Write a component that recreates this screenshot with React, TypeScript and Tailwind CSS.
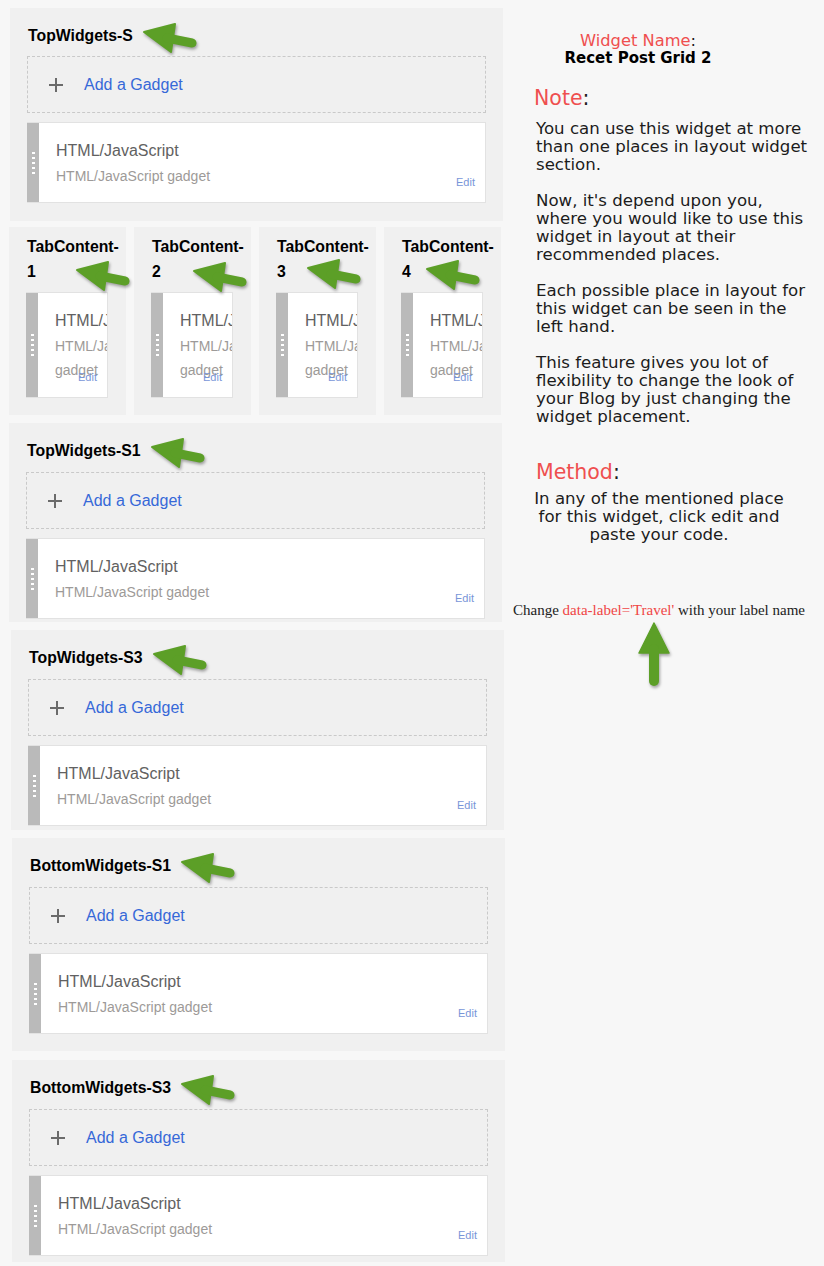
import type { ReactNode } from 'react'

const SANS = "font-['Liberation_Sans',Arial,sans-serif]"

function LeftArrow({ className = '' }: { className?: string }) {
  return (
    <svg
      width="58"
      height="34"
      viewBox="0 0 58 34"
      className={`drop-shadow-[1px_2px_1.5px_rgba(0,0,0,0.35)] ${className}`}
    >
      <path d="M3 12 L34 4 L30 32 Z" fill="#5c9f27" stroke="#5c9f27" strokeWidth="2" strokeLinejoin="round" />
      <line x1="26" y1="18" x2="51" y2="23" stroke="#5c9f27" strokeWidth="9" strokeLinecap="round" />
    </svg>
  )
}

function UpArrow() {
  return (
    <svg width="32" height="66" viewBox="0 0 32 66" className="drop-shadow-[1px_2px_1.5px_rgba(0,0,0,0.35)]">
      <path d="M16 2 L1 32 L31 32 Z" fill="#5c9f27" stroke="#5c9f27" strokeWidth="1.5" strokeLinejoin="round" />
      <line x1="16" y1="28" x2="16" y2="60" stroke="#5c9f27" strokeWidth="10" strokeLinecap="round" />
    </svg>
  )
}

function Gadget({ tall = false }: { tall?: boolean }) {
  return (
    <div
      className={`relative flex overflow-hidden border-y border-r border-[#e2e2e2] bg-white ${
        tall ? 'h-[106px]' : 'h-[81px]'
      }`}
    >
      <div className="flex w-[12px] shrink-0 flex-col items-center justify-center gap-[3px] bg-[#bababa]">
        {[0, 1, 2, 3, 4].map((i) => (
          <span key={i} className="h-[2px] w-[3px] bg-white" />
        ))}
      </div>
      <div className="min-w-0 flex-1 pl-[17px] pt-[18px]">
        <p className="whitespace-nowrap text-[16px] leading-[20px] text-[#616161]">HTML/JavaScript</p>
        <p className="mt-[3px] text-[14px] leading-[24px] text-[#9d9a98]">HTML/JavaScript gadget</p>
      </div>
      <span className="absolute bottom-[13px] right-[10px] text-[11px] leading-[13px] text-[#7895d8]">Edit</span>
    </div>
  )
}

function AddGadget() {
  return (
    <div className="flex h-[57px] items-center border border-dashed border-[#c9c9c9] pl-[20px]">
      <svg width="16" height="16" viewBox="0 0 16 16">
        <path d="M8 1 V15 M1 8 H15" stroke="#6b6b6b" strokeWidth="2" />
      </svg>
      <span className="ml-[20px] text-[16px] text-[#3668d8]">Add a Gadget</span>
    </div>
  )
}

function Section({
  title,
  className,
  children,
}: {
  title: string
  className: string
  children?: ReactNode
}) {
  return (
    <section className={`w-[493px] bg-[#f0f0f0] px-[17px] pt-[18px] ${className}`}>
      <div className="flex h-[20px] items-center">
        <h3 className="pl-px text-[15.8px] font-bold leading-[20px] text-black">{title}</h3>
        <LeftArrow className="-my-[7px] ml-[8px] -mt-[5px]" />
      </div>
      <div className="mt-[11px]">
        <AddGadget />
      </div>
      <div className="mt-[9px]">
        <Gadget />
      </div>
      {children}
    </section>
  )
}

const TABS = [
  { n: 1, arrow: 'left-[65px] top-[31px]', box: 'ml-0' },
  { n: 2, arrow: 'left-[57px] top-[32px]', box: 'ml-[8px]' },
  { n: 3, arrow: 'left-[46px] top-[29px]', box: 'ml-[8px]' },
  { n: 4, arrow: 'left-[40px] top-[30px]', box: 'ml-[8px]' },
]

function TabRow() {
  return (
    <div className="ml-[9px] mt-[6px] flex">
      {TABS.map((t) => (
        <div key={t.n} className={`relative w-[117px] bg-[#f0f0f0] pb-[17px] pl-[17px] pr-[18px] pt-[7px] ${t.box}`}>
          <h3 className="pl-px text-[15.8px] font-bold leading-[25px] text-black">TabContent-{t.n}</h3>
          <div className="mt-[8px]">
            <Gadget tall />
          </div>
          <LeftArrow className={`absolute z-10 ${t.arrow}`} />
        </div>
      ))}
    </div>
  )
}

export default function App() {
  return (
    <div className={`flex min-h-[1266px] bg-[#f7f7f7] ${SANS}`}>
      <div className="w-[512px] shrink-0 pt-[8px]">
        <Section title="TopWidgets-S" className="ml-[10px] pb-[18px] [&>div:nth-child(2)]:mt-[10px]" />
        <TabRow />
        <Section title="TopWidgets-S1" className="ml-[9px] mt-[8px] pb-[3px]" />
        <Section title="TopWidgets-S3" className="ml-[11px] mt-[8px] pb-[4px]" />
        <Section title="BottomWidgets-S1" className="ml-[12px] mt-[8px] pb-[17px]" />
        <Section title="BottomWidgets-S3" className="ml-[12px] mt-[9px] pb-[6px]" />
      </div>

      <div className="flex-1 font-['DejaVu_Sans',Verdana,sans-serif] text-[#1c1c1c]">
        <div className="w-[252px] pt-[32px] text-center">
          <p className="text-[16.3px] leading-[18px]">
            <span className="text-[#ef4f4f]">Widget Name</span>:
          </p>
          <p className="text-[15px] font-bold leading-[17px] text-black">Recet Post Grid 2</p>
        </div>

        <p className="ml-[22px] mt-[19px] text-[20.5px] leading-[24px]">
          <span className="text-[#ef4f4f]">Note</span>:
        </p>
        <div className="ml-[24px] mt-[10px] w-[276px] text-[16.6px] leading-[18px]">
          <p>You can use this widget at more than one places in layout widget section.</p>
          <p className="mt-[18px]">
            Now, it's depend upon you, where you would like to use this widget in layout at their recommended places.
          </p>
          <p className="mt-[18px]">Each possible place in layout for this widget can be seen in the left hand.</p>
          <p className="mt-[18px]">
            This feature gives you lot of flexibility to change the look of your Blog by just changing the widget
            placement.
          </p>
        </div>

        <p className="ml-[24px] mt-[34px] text-[20.5px] leading-[24px]">
          <span className="text-[#ef4f4f]">Method</span>:
        </p>
        <p className="ml-[12px] mt-[6px] w-[270px] text-center text-[16.6px] leading-[18px]">
          In any of the mentioned place for this widget, click edit and paste your code.
        </p>

        <p className="ml-[1px] mt-[58px] font-['Liberation_Serif','Times_New_Roman',serif] text-[15px] leading-[17px] text-[#222]">
          Change <span className="text-[#f04545]">data-label='Travel'</span> with your label name
        </p>
        <div className="ml-[126px] mt-[2px]">
          <UpArrow />
        </div>
      </div>
    </div>
  )
}
